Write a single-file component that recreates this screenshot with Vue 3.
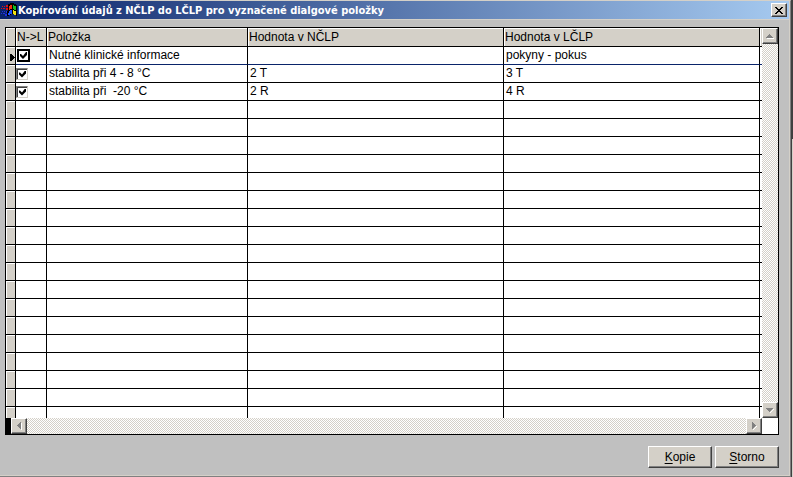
<template>
  <div class="window">
    <header class="titlebar">
      <svg class="logo" width="16" height="16" viewBox="0 0 16 16" shape-rendering="crispEdges">
        <path d="M7 2h2V1h4v1h2v1h1v11h-1v-1h-2v-1h-3v1H8v1H6V9h1z" fill="#000" />
        <path d="M1 4h1v1H1zM3 4h1v1H3zM5 3h2v2H5zM0 6h1v1H0zM2 6h2v1H2zM5 6h2v2H5z" fill="#e01010" />
        <path d="M1 9h1v1H1zM3 9h1v1H3zM5 9h1v2H5zM0 11h1v1H0zM2 11h2v1H2zM4 12h2v2H4z" fill="#2030e0" />
        <path d="M8 4h1V3h2v4H9v1H8z" fill="#f03010" />
        <path d="M12 3h1v1h2v4h-2V7h-1z" fill="#10c020" />
        <path d="M8 9h1V8h2v4H9v1H7v-2h1z" fill="#2050ff" />
        <path d="M12 8h1v1h2v4h-2v-1h-1z" fill="#f0e010" />
      </svg>
      <h1>Kopírování údajů z NČLP do LČLP pro vyznačené dialgové položky</h1>
      <button class="close" type="button" aria-label="Zavřít">
        <svg width="8" height="7" viewBox="0 0 8 7" shape-rendering="crispEdges">
          <path d="M0 0h2v1h1v1h2V1h1V0h2v1H7v1H6v1H5v1h1v1h1v1h1v1H6V6H5V5H3v1H2v1H0V6h1V5h1V4h1V3H2V2H1V1H0z" />
        </svg>
      </button>
    </header>

    <main class="content">
      <div class="grid">
        <div class="rows">
          <table>
            <colgroup>
              <col class="c-mark">
              <col class="c-check">
              <col class="c-item">
              <col>
              <col>
              <col class="c-rest">
            </colgroup>
            <thead>
              <tr>
                <th></th>
                <th>N-&gt;L</th>
                <th>Položka</th>
                <th>Hodnota v NČLP</th>
                <th>Hodnota v LČLP</th>
                <th></th>
              </tr>
            </thead>
            <tbody>
              <tr v-for="(row, i) in rows" :key="i" :class="{ current: i === current }" @click="current = i">
                <td class="mark">
                  <svg v-if="i === current" width="5" height="7" viewBox="0 0 5 7" shape-rendering="crispEdges">
                    <path d="M0 0h2v1h1v1h1v1h1v1H4v1H3v1H2v1H0z" />
                  </svg>
                </td>
                <td class="check">
                  <input v-if="row.name" v-model="row.copy" type="checkbox" :aria-label="row.name">
                </td>
                <td>{{ row.name }}</td>
                <td>{{ row.nclp }}</td>
                <td>{{ row.lclp }}</td>
                <td></td>
              </tr>
            </tbody>
          </table>
        </div>
        <div class="scroll vertical">
          <button type="button" aria-label="Nahoru">
            <svg width="8" height="5" viewBox="0 0 8 5" shape-rendering="crispEdges">
              <path class="lit" d="M1 4h7v1H1z" />
              <path d="M3 0h1v1h1v1h1v1h1v1H0V3h1V2h1V1h1z" />
            </svg>
          </button>
          <button type="button" aria-label="Dolů">
            <svg width="8" height="5" viewBox="0 0 8 5" shape-rendering="crispEdges">
              <path class="lit" d="M7 1h1v1H7v1H6v1H5v1H4V4h1V3h1V2h1z" />
              <path d="M0 0h7v1H6v1H5v1H4v1H3V3H2V2H1V1H0z" />
            </svg>
          </button>
        </div>
        <div class="scroll horizontal">
          <button type="button" aria-label="Vlevo">
            <svg width="5" height="8" viewBox="0 0 5 8" shape-rendering="crispEdges">
              <path class="lit" d="M4 1h1v7H4z" />
              <path d="M4 0v7H3V6H2V5H1V4H0V3h1V2h1V1h1V0z" />
            </svg>
          </button>
          <button type="button" aria-label="Vpravo">
            <svg width="5" height="8" viewBox="0 0 5 8" shape-rendering="crispEdges">
              <path class="lit" d="M1 7h1V6h1V5h1V4h1v1H4v1H3v1H2v1H1z" />
              <path d="M0 0h1v1h1v1h1v1h1v1H3v1H2v1H1v1H0z" />
            </svg>
          </button>
        </div>
      </div>

      <div class="actions">
        <button type="button" accesskey="k"><span><u>K</u>opie</span></button>
        <button type="button" accesskey="s"><span><u>S</u>torno</span></button>
      </div>
    </main>
  </div>
</template>

<script setup>
import { ref } from 'vue'

const current = ref(0)

const rows = ref([
  { copy: true, name: 'Nutné klinické informace', nclp: '', lclp: 'pokyny - pokus' },
  { copy: true, name: 'stabilita při 4 - 8 °C', nclp: '2 T', lclp: '3 T' },
  { copy: true, name: 'stabilita při  -20 °C', nclp: '2 R', lclp: '4 R' },
  // prázdné řádky mřížky
  ...Array.from({ length: 18 }, () => ({ copy: false, name: '', nclp: '', lclp: '' }))
])
</script>

<style>
body {
  background: linear-gradient(#404040 139px, #d4d0c8 139px) no-repeat #d4d0c8;
}
</style>

<style scoped>
.window {
  display: flex;
  flex-direction: column;
  box-sizing: border-box;
  height: 100vh;
  min-height: 200px;
  margin-right: 2px;
  border-top: 1px solid #d4d0c8;
  border-right: 1px solid #808080;
  border-bottom: 1px solid #808080;
  background: #c0c0c0;
  box-shadow: inset -1px -1px #d4d0c8, 1px 0 #404040;
  font-family: "Liberation Sans", Arial, sans-serif;
  font-size: 12px;
  color: #000;
}
.titlebar {
  display: flex;
  align-items: center;
  height: 18px;
  margin-right: 1px;
  padding: 0 2px 0 1px;
  border-bottom: 1px solid #d4d0c8;
  background: linear-gradient(to right, #0a246a, #a6caf0);
}
.logo {
  flex: none;
}
h1 {
  flex: 1;
  margin: 1px 0 0 1px;
  color: #fff;
  font: bold 11px/17px "DejaVu Sans Condensed", "DejaVu Sans", sans-serif;
  white-space: nowrap;
}
button {
  display: flex;
  align-items: center;
  justify-content: center;
  box-sizing: border-box;
  padding: 0;
  border: 1px solid;
  border-color: #fff #404040 #404040 #fff;
  background: #d4d0c8;
  box-shadow: inset -1px -1px #808080;
  color: #000;
  font: inherit;
}
.close {
  width: 16px;
  height: 14px;
}
.content {
  display: flex;
  flex: 1;
  flex-direction: column;
  min-height: 0;
  padding: 7px 11px 8px 5px;
}
.grid {
  display: grid;
  flex: 1;
  grid-template-columns: minmax(0, 1fr) 16px;
  grid-template-rows: minmax(0, 1fr) 16px;
  min-height: 0;
  border: 1px solid #000;
  background: #fff;
}
.rows {
  overflow: hidden;
}
table {
  width: 100%;
  table-layout: fixed;
  border-collapse: separate;
  border-spacing: 0;
}
.c-mark {
  width: 10px;
}
.c-check {
  width: 31px;
}
.c-item {
  width: 201px;
}
.c-rest {
  width: 2px;
}
th,
td {
  box-sizing: border-box;
  height: 18px;
  padding: 0 0 0 2px;
  border-right: 1px solid #000;
  border-bottom: 1px solid #000;
  line-height: 17px;
  text-align: left;
  white-space: pre;
  font-weight: normal;
}
th {
  height: 19px;
  padding-left: 1px;
  background: #d4d0c8;
  box-shadow: inset 1px 1px #fff;
}
th:last-child,
td:last-child {
  padding: 0;
  border-right: 0;
}
.mark {
  padding: 0;
  background: #d4d0c8;
  box-shadow: inset 1px 1px #fff;
}
.mark svg {
  display: block;
  margin: 4px 0 0 auto;
}
.check {
  padding: 0;
}
.current td:not(.mark) {
  border-bottom-color: #0a246a;
}
input {
  display: block;
  appearance: none;
  box-sizing: border-box;
  width: 12px;
  height: 12px;
  margin: 0;
  border: 1px solid;
  border-color: #808080 #d4d0c8 #d4d0c8 #808080;
  background: #fff;
  box-shadow: inset 1px 1px #404040;
}
.current input {
  width: 13px;
  height: 13px;
  margin-left: 1px;
  border: 2px solid #000;
  box-shadow: none;
}
input:checked::before {
  content: "";
  display: block;
  width: 7px;
  height: 7px;
  margin: 2px 0 0 2px;
  background: #000;
  clip-path: polygon(0 2px, 1px 2px, 3px 4px, 6px 0, 7px 0, 7px 3px, 3px 7px, 0 4px);
}
.current input:checked::before {
  margin: 1px;
}
.scroll {
  display: flex;
  justify-content: space-between;
  background: repeating-conic-gradient(#d4d0c8 0 25%, #fff 0 50%) 0 0 / 2px 2px;
}
.scroll button {
  width: 16px;
  height: 16px;
}
.scroll path {
  fill: #808080;
}
.scroll .lit {
  fill: #fff;
}
.vertical {
  flex-direction: column;
}
.horizontal {
  border-left: 5px solid #000;
}
.actions {
  display: flex;
  justify-content: flex-end;
  gap: 3px;
  padding-top: 11px;
}
.actions button {
  width: 64px;
  height: 22px;
}
u {
  text-underline-offset: 2px;
}
</style>
